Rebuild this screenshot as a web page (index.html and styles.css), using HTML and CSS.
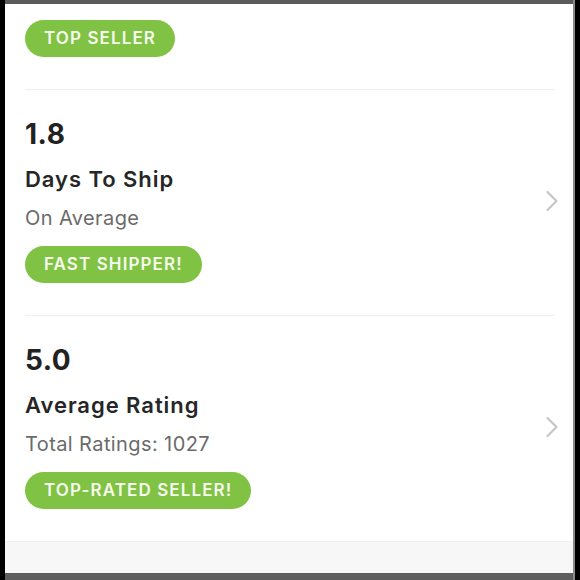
FILE: index.html
```html
<!DOCTYPE html>
<html lang="en">
<head>
  <meta charset="UTF-8">
  <meta name="viewport" content="width=device-width, initial-scale=1.0">
  <title>Seller Stats</title>
  <link rel="stylesheet" href="styles.css">
</head>
<body>
  <div class="screen">
    <div class="top-bar"></div>
    <div class="content">
      <div class="badge-row">
        <span class="pill">TOP SELLER</span>
      </div>

      <div class="stat-row">
        <div class="stat-info">
          <div class="stat-value">1.8</div>
          <div class="stat-title">Days To Ship</div>
          <div class="stat-sub">On Average</div>
          <span class="pill">FAST SHIPPER!</span>
        </div>
        <svg class="chevron" width="14" height="22" viewBox="0 0 14 22">
          <path d="M2.5 2 L11.5 11 L2.5 20" fill="none" stroke="#c6c6c6" stroke-width="2.2" stroke-linecap="round" stroke-linejoin="round"/>
        </svg>
      </div>

      <div class="stat-row">
        <div class="stat-info">
          <div class="stat-value">5.0</div>
          <div class="stat-title">Average Rating</div>
          <div class="stat-sub">Total Ratings: 1027</div>
          <span class="pill">TOP-RATED SELLER!</span>
        </div>
        <svg class="chevron" width="14" height="22" viewBox="0 0 14 22">
          <path d="M2.5 2 L11.5 11 L2.5 20" fill="none" stroke="#c6c6c6" stroke-width="2.2" stroke-linecap="round" stroke-linejoin="round"/>
        </svg>
      </div>
    </div>
    <div class="footer-strip"></div>
    <div class="bottom-bar"></div>
  </div>
</body>
</html>
```

FILE: styles.css
```css
body {
    margin: 0;
    background: #000;
    font-family: Inter, "Open Sans", sans-serif;
}

.screen {
    margin-left: 5px;
    width: 568px;
    height: 580px;
    background: #fff;
    border-right: 2px solid #8a8a8a;
    display: flex;
    flex-direction: column;
    overflow: hidden;
}

.top-bar {
    height: 4px;
    background: #5b5b5b;
}

.content {
    padding: 0 18px 0 20px;
}

.badge-row {
    padding: 16px 0 32px;
    border-bottom: 1px solid #f0efea;
}

.pill {
    display: inline-block;
    height: 37px;
    line-height: 37px;
    padding: 0 19px;
    border-radius: 19px;
    background: #80c243;
    color: #f6fbee;
    font-size: 17px;
    font-weight: 600;
    letter-spacing: 1.1px;
}

.stat-row {
    display: flex;
    align-items: center;
    justify-content: space-between;
    padding: 27px 0 32px;
    border-bottom: 1px solid #f0efea;
}

.stat-row:last-child {
    border-bottom: none;
}

.stat-value {
    font-size: 28px;
    font-weight: 700;
    color: #222;
    line-height: 34px;
    letter-spacing: 0.5px;
}

.stat-title {
    margin-top: 14px;
    font-size: 22px;
    font-weight: 600;
    color: #262626;
    line-height: 28px;
    letter-spacing: 0.95px;
}

.stat-sub {
    margin-top: 13px;
    margin-bottom: 16px;
    font-size: 20px;
    color: #6b6b6b;
    line-height: 24px;
    letter-spacing: 0.4px;
}

.chevron {
    margin-top: 2px;
    margin-right: -4px;
}

.footer-strip {
    height: 31px;
    background: #f7f7f7;
    border-top: 1px solid #f0f0f0;
}

.bottom-bar {
    flex: 1;
    background: #5e5e5e;
}
```
